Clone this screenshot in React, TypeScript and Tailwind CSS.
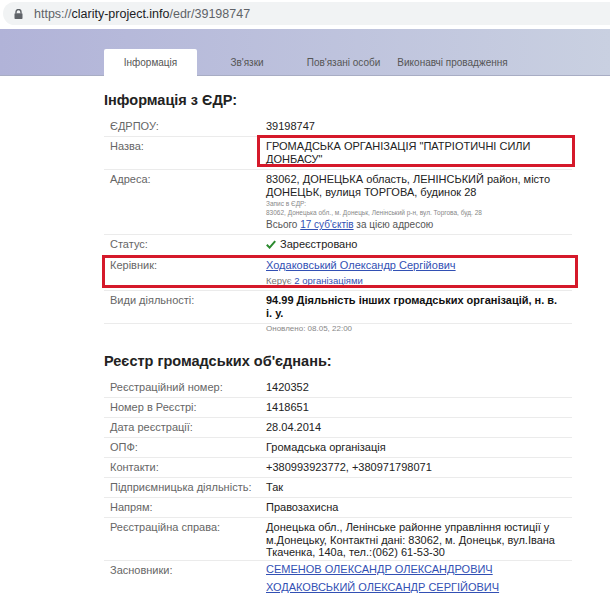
import React from 'react';

const FONT = { fontFamily: '"Liberation Sans", Arial, sans-serif' };

const Row = ({
  label,
  children,
  first = false,
  valueClass = 'pb-[3px] leading-[13px]',
}: {
  label: string;
  children: React.ReactNode;
  first?: boolean;
  valueClass?: string;
}) => (
  <div className={`relative flex ${first ? '' : 'border-t border-[#ebebeb]'}`}>
    <div className="w-[162px] shrink-0 pl-[6px] pt-[3px] pb-[3px] text-[11px] leading-[13px] text-[#666]">
      {label}
    </div>
    <div className={`w-[298px] pt-[3px] text-[11px] text-[#222] ${valueClass}`}>{children}</div>
  </div>
);

const Link = ({ children }: { children: React.ReactNode }) => (
  <a href="#" className="text-[#3250b4] underline underline-offset-1">
    {children}
  </a>
);

const RedBox = ({ className }: { className: string }) => (
  <div className={`pointer-events-none absolute border-[3px] border-[#d5192a] ${className}`} />
);

export default function App() {
  return (
    <div className="w-[610px] h-[597px] overflow-hidden bg-white" style={FONT}>
      {/* browser address bar */}
      <div className="pt-[2px] pl-[3px]">
        <div className="flex h-[23px] items-center rounded-l-full bg-[#f1f3f4] pl-[11px]">
          <svg width="9" height="10" viewBox="0 0 9 10" className="mr-[11px]">
            <path d="M2 4.5V3a2.5 2.5 0 0 1 5 0v1.5" fill="none" stroke="#5f6368" strokeWidth="1.4" />
            <rect x="0.5" y="4.3" width="8" height="5.7" rx="0.8" fill="#5f6368" />
          </svg>
          <span className="text-[12.5px] leading-[16px] text-[#5f6368]">
            https://<span className="text-[#202124]">clarity-project.info</span>/edr/39198747
          </span>
        </div>
      </div>

      {/* tabs band */}
      <div className="mt-[4px] flex h-[47px] items-end border-b border-[#a8adc4] bg-gradient-to-r from-[#b1b3d8] to-[#c9d0e1] pl-[104px]">
        <div className="-mb-px flex h-[27px] w-[93px] items-center justify-center rounded-t-[2px] bg-white text-[10px] text-[#555]">
          Інформація
        </div>
        <div className="flex h-[26px] w-[100px] items-center justify-center text-[10px] text-[#555]">Зв'язки</div>
        <div className="flex h-[26px] w-[93px] items-center justify-center text-[10px] text-[#555]">
          Пов'язані особи
        </div>
        <div className="flex h-[26px] w-[125px] items-center justify-center text-[10px] text-[#555]">
          Виконавчі провадження
        </div>
      </div>

      <div className="ml-[104px] w-[468px]">
        <h2 className="mt-[14px] mb-[7px] text-[14.5px] font-bold leading-[20px] text-[#222]">Інформація з ЄДР:</h2>

        <Row label="ЄДРПОУ:" first>
          39198747
        </Row>
        <Row label="Назва:">
          ГРОМАДСЬКА ОРГАНІЗАЦІЯ "ПАТРІОТИЧНІ СИЛИ ДОНБАСУ"
          <RedBox className="left-[153px] -right-[3px] -top-[2px] bottom-[2px]" />
        </Row>
        <Row label="Адреса:" valueClass="pb-[3px] leading-[12.5px]">
          83062, ДОНЕЦЬКА область, ЛЕНІНСЬКИЙ район, місто ДОНЕЦЬК, вулиця ТОРГОВА, будинок 28
          <div className="mt-[1px] text-[6.5px] leading-[9px] text-[#888]">
            Запис в ЄДР:
            <br />
            83062, Донецька обл., м. Донецьк, Ленінський р-н, вул. Торгова, буд. 28
          </div>
          <div className="mt-[1px] text-[10px] leading-[13px] text-[#555]">
            Всього <Link>17 суб'єктів</Link> за цією адресою
          </div>
        </Row>
        <Row label="Статус:">
          <span className="inline-flex items-center gap-[4px]">
            <svg width="10" height="9" viewBox="0 0 10 9">
              <path d="M0.8 4.8 3.6 7.6 9.2 1.2" fill="none" stroke="#2b8a2e" strokeWidth="2" />
            </svg>
            Зареєстровано
          </span>
        </Row>
        <Row label="Керівник:" valueClass="pb-[3px] leading-[12px]">
          <Link>Ходаковський Олександр Сергійович</Link>
          <div className="mt-[3px] text-[9.5px] leading-[13px] text-[#777]">
            Керує <Link>2 організаціями</Link>
          </div>
          <RedBox className="-left-[2px] -right-[6px] -top-[1px] bottom-[2px]" />
        </Row>
        <Row label="Види діяльності:">
          <span className="text-[11px] font-bold text-[#111]">
            94.99 Діяльність інших громадських організацій, н. в. і. у.
          </span>
        </Row>
        <div className="flex border-t border-[#ebebeb]">
          <div className="w-[162px] shrink-0" />
          <div className="text-[8px] leading-[10px] text-[#888]">Оновлено: 08.05, 22:00</div>
        </div>

        <h2 className="mt-[17px] mb-[7px] text-[14.5px] font-bold leading-[20px] text-[#222]">
          Реєстр громадських об'єднань:
        </h2>

        <Row label="Реєстраційний номер:" first>
          1420352
        </Row>
        <Row label="Номер в Реєстрі:">1418651</Row>
        <Row label="Дата реєстрації:">28.04.2014</Row>
        <Row label="ОПФ:">Громадська організація</Row>
        <Row label="Контакти:">+380993923772, +380971798071</Row>
        <Row label="Підприємницька діяльність:">Так</Row>
        <Row label="Напрям:">Правозахисна</Row>
        <Row label="Реєстраційна справа:" valueClass="pb-[1px] leading-[12.5px]">
          Донецька обл., Ленінське районне управління юстиції у м.Донецьку, Контактні дані: 83062, м. Донецьк,
          вул.Івана Ткаченка, 140а, тел.:(062) 61-53-30
        </Row>
        <Row label="Засновники:">
          <div className="-mt-[4px] leading-[18px]">
            <Link>СЕМЕНОВ ОЛЕКСАНДР ОЛЕКСАНДРОВИЧ</Link>
            <br />
            <Link>ХОДАКОВСЬКИЙ ОЛЕКСАНДР СЕРГІЙОВИЧ</Link>
          </div>
        </Row>
      </div>
    </div>
  );
}
